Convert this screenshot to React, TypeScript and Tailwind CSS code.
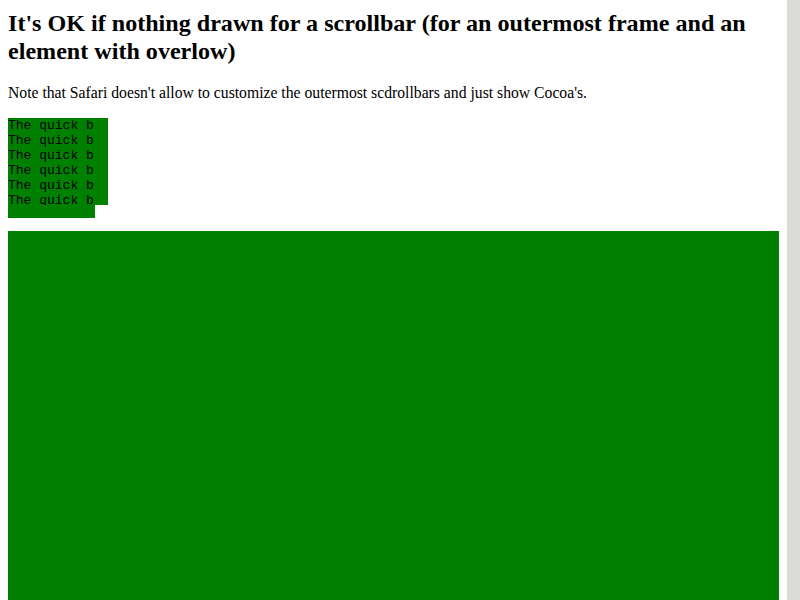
export default function App() {
  const lines = Array.from({ length: 6 });
  return (
    <div className="flex h-[600px] w-[800px] overflow-hidden bg-white">
      <div className="flex-1 px-2 pt-[10px] text-black [font-family:'Liberation_Serif',serif]">
        <h2 className="mb-[19px] text-[24.1px] font-bold leading-[27.6px]">
          It's OK if nothing drawn for a scrollbar (for an outermost frame and an element with overlow)
        </h2>
        <p className="mb-[15px] text-[15.7px] leading-[18.4px]">
          Note that Safari doesn't allow to customize the outermost scdrollbars and just show Cocoa's.
        </p>
        <div className="flex flex-col">
          <div className="h-[87px] w-[100px] overflow-hidden bg-[#008000] text-[13px] leading-[15px] [font-family:'Liberation_Mono',monospace]">
            {lines.map((_, i) => (
              <div key={i} className="whitespace-pre">The quick b</div>
            ))}
          </div>
          <div className="h-[13px] w-[87px] bg-[#008000]" />
        </div>
        <div className="mt-[13px] h-[400px] w-[771px] bg-[#008000]" />
      </div>
      <div className="h-full w-[13px] shrink-0 bg-[#dbdbd7]" />
    </div>
  );
}
